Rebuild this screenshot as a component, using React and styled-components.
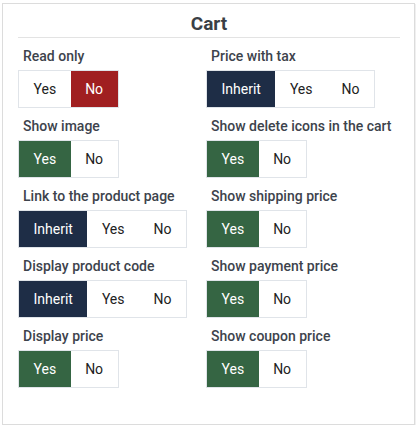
import React from "react";
import styled, { createGlobalStyle } from "styled-components";

const Global = createGlobalStyle`
  html, body { margin: 0; padding: 0; background: #fff; }
  body { font-family: Roboto, "Liberation Sans", Arial, sans-serif; }
`;

const Panel = styled.section`
  box-sizing: border-box;
  width: 413px;
  height: 422px;
  margin: 3px 0 0 2px;
  border: 1px solid #dcdcdc;
  box-shadow: 1px 1px 0 #f0f0f0;
  padding: 0 14px 0 15px;
  background: #fff;
`;

const Title = styled.h2`
  margin: 0;
  padding-top: 9px;
  line-height: 22px;
  font-size: 19px;
  font-weight: 700;
  color: #3a3f46;
  text-align: center;
  border-bottom: 1px solid #e3e3e3;
  padding-bottom: 2px;
`;

const Grid = styled.div`
  display: grid;
  grid-template-columns: 188px 1fr;
  row-gap: 8px;
  padding-top: 8px;
`;

const Field = styled.div`
  display: flex;
  flex-direction: column;
  align-items: flex-start;
`;

const Label = styled.div`
  padding-left: 5px;
  line-height: 20px;
  height: 20px;
  margin-bottom: 4px;
  font-size: 14px;
  font-weight: 500;
  color: #3d434c;
  white-space: nowrap;
`;

const Group = styled.div`
  display: flex;
  border: 1px solid #e0e4e9;
  height: 36px;
`;

const colors = {
  red: "#a01f21",
  navy: "#1e2d46",
  green: "#356543",
};

const Btn = styled.button`
  appearance: none;
  border: none;
  margin: 0;
  padding: 0 14.5px;
  height: 36px;
  font-family: Roboto, "Liberation Sans", Arial, sans-serif;
  font-size: 14px;
  font-weight: 400;
  cursor: pointer;
  background: ${(p) => (p.$active ? colors[p.$tone] : "#fff")};
  color: ${(p) => (p.$active ? "#fff" : "#222")};
`;

const fields = [
  { label: "Read only", opts: ["Yes", "No"], active: 1, tone: "red" },
  { label: "Price with tax", opts: ["Inherit", "Yes", "No"], active: 0, tone: "navy" },
  { label: "Show image", opts: ["Yes", "No"], active: 0, tone: "green" },
  { label: "Show delete icons in the cart", opts: ["Yes", "No"], active: 0, tone: "green" },
  { label: "Link to the product page", opts: ["Inherit", "Yes", "No"], active: 0, tone: "navy" },
  { label: "Show shipping price", opts: ["Yes", "No"], active: 0, tone: "green" },
  { label: "Display product code", opts: ["Inherit", "Yes", "No"], active: 0, tone: "navy" },
  { label: "Show payment price", opts: ["Yes", "No"], active: 0, tone: "green" },
  { label: "Display price", opts: ["Yes", "No"], active: 0, tone: "green" },
  { label: "Show coupon price", opts: ["Yes", "No"], active: 0, tone: "green" },
];

export default function App() {
  return (
    <>
      <Global />
      <Panel>
        <Title>Cart</Title>
        <Grid>
          {fields.map((f) => (
            <Field key={f.label}>
              <Label>{f.label}</Label>
              <Group>
                {f.opts.map((o, i) => (
                  <Btn key={o} $active={i === f.active} $tone={f.tone}>
                    {o}
                  </Btn>
                ))}
              </Group>
            </Field>
          ))}
        </Grid>
      </Panel>
    </>
  );
}
